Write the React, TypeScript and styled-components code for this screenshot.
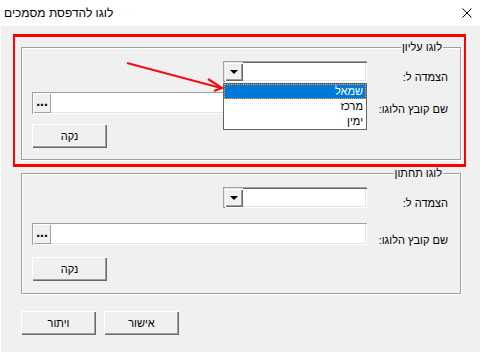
import React, { FC } from 'react';
import styled, { createGlobalStyle } from 'styled-components';

const GlobalStyle = createGlobalStyle`
html, body {
    margin: 0;
    padding: 0;
    background: #ffffff;
}
body {
    font-family: "Liberation Sans", "DejaVu Sans", sans-serif;
    font-size: 11px;
    color: #000000;
}
`;

const Window = styled.div`
position: relative;
width: 480px;
height: 352px;
display: flex;
flex-direction: column;
background: #ffffff;
overflow: hidden;
`;

const TitleBar = styled.div`
height: 26px;
flex-shrink: 0;
display: flex;
align-items: center;
justify-content: space-between;
padding: 0 8px 0 4px;
`;

const Title = styled.span`
direction: rtl;
font-size: 12px;
line-height: 16px;
`;

const Body = styled.div`
flex: 1;
margin-left: 1px;
background: #f0f0f0;
direction: rtl;
display: flex;
flex-direction: column;
padding: 21px 19px 0 20px;
`;

const GroupBox = styled.div<{ $top?: number; $bottom: number }>`
display: flex;
flex-direction: column;
margin-top: ${p => p.$top || 0}px;
padding: 0 12px ${p => p.$bottom}px 10px;
border: 1px solid #a0a0a0;
box-shadow: inset 1px 1px 0 #ffffff, 1px 1px 0 #ffffff;
`;

const Legend = styled.span`
align-self: flex-start;
margin: -8px 5px 0 0;
padding: 0 1px;
line-height: 14px;
background: #f0f0f0;
`;

const Row = styled.div<{ $top: number }>`
display: grid;
grid-template-columns: 81px 335px;
margin-top: ${p => p.$top}px;
`;

const FieldLabel = styled.span`
align-self: end;
line-height: 12px;
margin-bottom: -1px;
white-space: nowrap;
`;

const ComboBox = styled.div`
position: relative;
justify-self: start;
width: 144px;
height: 21px;
box-sizing: border-box;
direction: ltr;
display: flex;
padding: 1px;
background: #ffffff;
box-shadow: inset 1px 1px 0 #a0a0a0, inset 2px 2px 0 #696969, inset -1px -1px 0 #ffffff, inset -2px -2px 0 #e3e3e3;
`;

const ComboArrowButton = styled.div`
width: 19px;
height: 19px;
box-sizing: border-box;
display: flex;
align-items: center;
justify-content: center;
background: #f0f0f0;
box-shadow: inset 1px 1px 0 #e3e3e3, inset 2px 2px 0 #ffffff, inset -1px -1px 0 #696969, inset -2px -2px 0 #a0a0a0;

&::after {
    content: "";
    border-left: 4px solid transparent;
    border-right: 4px solid transparent;
    border-top: 4px solid #000000;
}
`;

const DropList = styled.div`
position: absolute;
top: 22px;
left: 0;
width: 144px;
box-sizing: border-box;
border: 1px solid #646464;
background: #ffffff;
direction: rtl;
z-index: 2;
`;

const DropItem = styled.div<{ $selected?: boolean }>`
height: 15px;
line-height: 15px;
padding-right: 3px;
background: ${p => p.$selected ? '#0078d7' : '#ffffff'};
color: ${p => p.$selected ? '#ffffff' : '#000000'};
outline: ${p => p.$selected ? '1px dotted #f7a33a' : 'none'};
outline-offset: -1px;
`;

const TextField = styled.div`
height: 22px;
box-sizing: border-box;
direction: ltr;
display: flex;
padding: 1px;
background: #ffffff;
box-shadow: inset 1px 1px 0 #a0a0a0, inset -1px -1px 0 #ffffff, inset -2px -2px 0 #e3e3e3;
`;

const BrowseButton = styled.div`
width: 18px;
height: 20px;
box-sizing: border-box;
display: flex;
align-items: center;
justify-content: center;
background: #f0f0f0;
font-weight: bold;
font-size: 14px;
line-height: 14px;
padding-bottom: 5px;
box-shadow: inset 1px 1px 0 #ffffff, inset -1px -1px 0 #a0a0a0;
`;

const Button = styled.div`
justify-self: end;
width: 75px;
height: 24px;
box-sizing: border-box;
display: flex;
align-items: center;
justify-content: center;
background: #f0f0f0;
box-shadow: inset 1px 1px 0 #ffffff, inset -1px -1px 0 #696969, inset -2px -2px 0 #a0a0a0;
`;

const FooterRow = styled.div`
display: flex;
justify-content: flex-end;
gap: 8px;
margin-top: 17px;
`;

const Highlight = styled.div`
position: absolute;
left: 13px;
top: 34px;
width: 453px;
height: 133px;
box-sizing: border-box;
border: 2px solid #ff0000;
border-top-width: 3px;
border-bottom-width: 3px;
pointer-events: none;
`;

const ArrowLayer = styled.svg`
position: absolute;
left: 0;
top: 0;
pointer-events: none;
z-index: 3;
`;

const CloseIcon: FC = () => (
    <svg width="10" height="10" viewBox="0 0 10 10">
        <path d="M0.5 0.5 L9.5 9.5 M9.5 0.5 L0.5 9.5" stroke="#000" strokeWidth="1" fill="none" />
    </svg>
);

interface GroupProps {
    title: string;
    top?: number;
    gaps: [number, number];
    bottom: number;
    open?: boolean;
}

const LogoGroup: FC<GroupProps> = ({ title, top, gaps, bottom, open }) => (
    <GroupBox $top={top} $bottom={bottom}>
        <Legend>{title}</Legend>
        <Row $top={7}>
            <FieldLabel>הצמדה ל:</FieldLabel>
            <ComboBox>
                <ComboArrowButton />
                {open &&
                    <DropList>
                        <DropItem $selected>שמאל</DropItem>
                        <DropItem>מרכז</DropItem>
                        <DropItem>ימין</DropItem>
                    </DropList>
                }
            </ComboBox>
        </Row>
        <Row $top={gaps[0]}>
            <FieldLabel>שם קובץ הלוגו:</FieldLabel>
            <TextField>
                <BrowseButton>...</BrowseButton>
            </TextField>
        </Row>
        <Row $top={gaps[1]}>
            <span />
            <Button>נקה</Button>
        </Row>
    </GroupBox>
);

const App: FC = () => {
    return (
        <>
            <GlobalStyle />
            <Window>
                <TitleBar>
                    <Title>לוגו להדפסת מסמכים</Title>
                    <CloseIcon />
                </TitleBar>
                <Body>
                    <LogoGroup title="לוגו עליון" gaps={[10, 10]} bottom={11} open />
                    <LogoGroup title="לוגו תחתון" top={13} gaps={[15, 12]} bottom={12} />
                    <FooterRow>
                        <Button>אישור</Button>
                        <Button>ויתור</Button>
                    </FooterRow>
                </Body>
                <Highlight />
                <ArrowLayer width="480" height="352">
                    <path d="M127 63 L221 88" stroke="#f01010" strokeWidth="2.2" fill="none" />
                    <path d="M208 79 L222 88 L214 91" stroke="#f01010" strokeWidth="2.2" fill="none" strokeLinejoin="miter" />
                </ArrowLayer>
            </Window>
        </>
    );
};

export default App;
